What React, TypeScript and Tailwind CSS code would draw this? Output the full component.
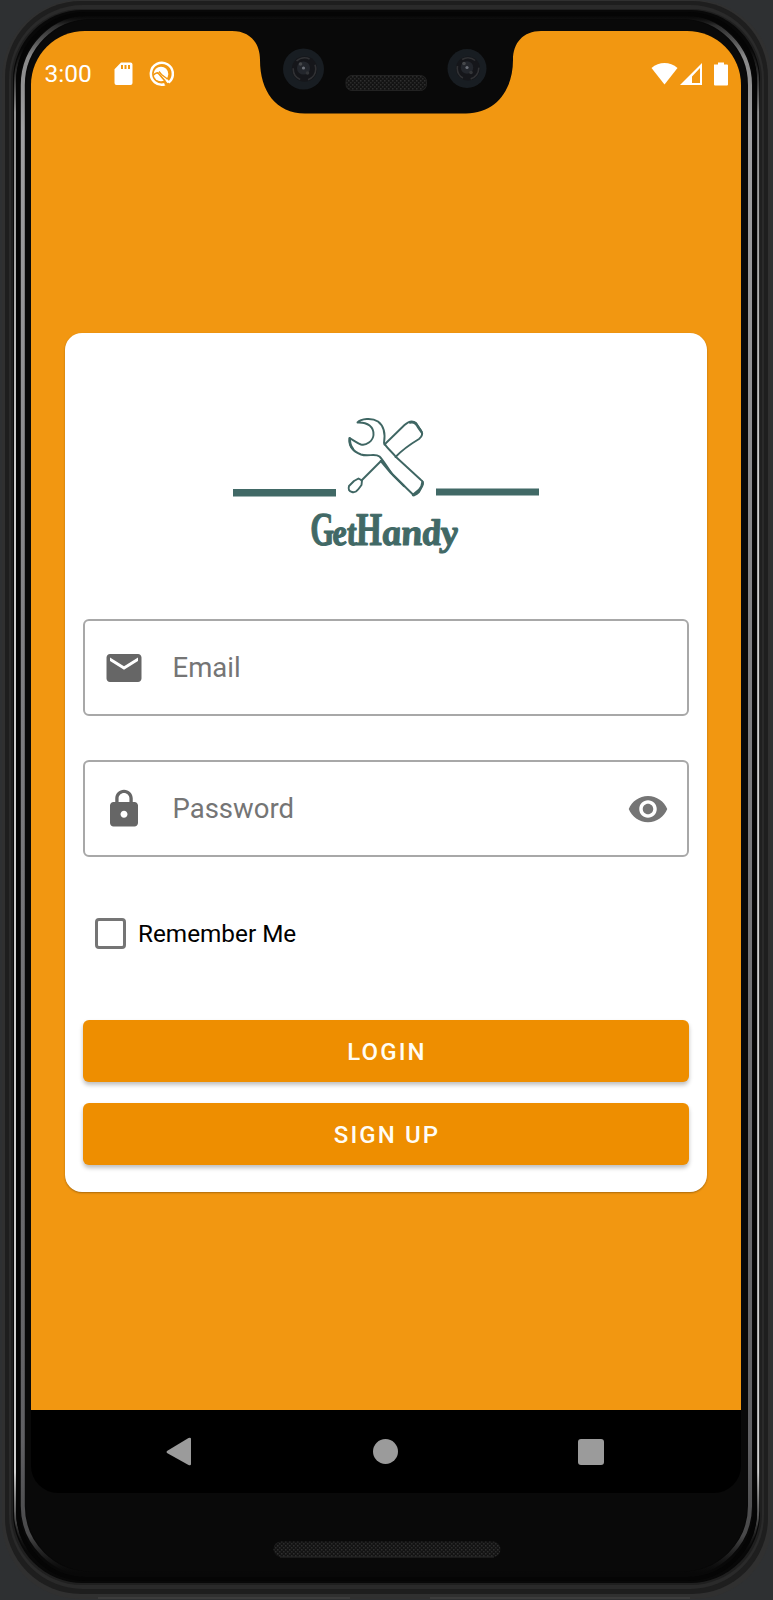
import React from "react";

function DeviceFrame() {
  return (
    <svg className="absolute inset-0" width="773" height="1600" viewBox="0 0 773 1600" fill="none" aria-hidden="true">
      <defs>
        <linearGradient id="shine" x1="0" y1="0" x2="0" y2="1600" gradientUnits="userSpaceOnUse">
          <stop offset=".01" stopColor="#222" stopOpacity="0" />
          <stop offset=".016" stopColor="#555" stopOpacity=".5" />
          <stop offset=".035" stopColor="#888" />
          <stop offset=".08" stopColor="#a0a0a2" />
          <stop offset=".4" stopColor="#808083" />
          <stop offset=".9" stopColor="#606063" />
          <stop offset=".96" stopColor="#484849" />
          <stop offset=".983" stopColor="#222" stopOpacity="0" />
        </linearGradient>
        <linearGradient id="edge" x1="0" y1="0" x2="0" y2="1600" gradientUnits="userSpaceOnUse">
          <stop offset=".03" stopColor="#555" stopOpacity="0" />
          <stop offset=".07" stopColor="#909090" />
          <stop offset=".3" stopColor="#d0d0d0" />
          <stop offset=".92" stopColor="#d0d0d0" />
          <stop offset=".95" stopColor="#777" stopOpacity=".6" />
          <stop offset=".97" stopColor="#222" stopOpacity="0" />
        </linearGradient>
      </defs>
      <rect x="2" y="0" width="770" height="1599" rx="78" fill="#303030" />
      <rect x="5" y="1" width="763" height="1593" rx="76" fill="#1e1e1e" />
      <rect x="9" y="5" width="755" height="1584" rx="74" fill="#2a2a2a" />
      <rect x="11" y="9" width="751" height="1576" rx="71" fill="#1f1f1f" />
      <rect x="13" y="10" width="747" height="1573" rx="70" fill="#080808" />
      <rect x="15" y="12" width="743.2" height="1569" rx="70" stroke="url(#edge)" strokeWidth="2" />
      <rect x="18" y="14" width="737" height="1565" rx="68" stroke="#050505" strokeWidth="4" />
      <rect x="22.8" y="17" width="727.2" height="1557" rx="68" stroke="url(#shine)" strokeWidth="4" />
      <rect x="26" y="19.500" width="721" height="1552" rx="65" fill="#090909" />
      <path d="M98 1598H350" stroke="#484848" />
      <path d="M430 1598H690" stroke="#484848" />
    </svg>
  );
}

function Lens({ cx, cy, r }: { cx: number; cy: number; r: number }) {
  return (
    <g>
      <circle cx={cx} cy={cy} r={r} fill="#181d22" />
      <circle cx={cx + 1} cy={cy} r={r * 0.62} fill="#15161a" />
      <circle cx={cx + 1} cy={cy} r={r * 0.55} stroke="#303134" strokeWidth="1.600" strokeDasharray="14 8" fill="none" />
      <circle cx={cx} cy={cy - 1} r={r * 0.32} fill="#23262c" />
      <circle cx={cx - 3} cy={cy - 5} r="1.800" fill="#45474a" />
      <circle cx={cx} cy={cy - 1} r="1.600" fill="#6c7078" />
      <circle cx={cx + 4} cy={cy + 4} r="1.800" fill="#333538" />
    </g>
  );
}

function Notch() {
  return (
    <svg className="absolute left-[191px] top-[-1px]" width="328" height="86" viewBox="222 30 328 86" aria-hidden="true">
      <defs>
        <pattern id="mesh" width="4" height="4" patternUnits="userSpaceOnUse">
          <rect width="4" height="4" fill="#131313" />
          <rect x="0" y="0" width="1.500" height="1.500" fill="#2e2e2e" />
          <rect x="2" y="2" width="1.500" height="1.500" fill="#2a2a2a" />
        </pattern>
      </defs>
      <path d="M222 30V31H232C250 31 260 43 260 60C260 91 276 113.500 305 113.500H466C495 113.500 513 91 513 60C513 43 523 31 541 31H550V30Z" fill="#090909" />
      <Lens cx={303.500} cy={69} r={20.500} />
      <Lens cx={467} cy={68.500} r={19.500} />
      <rect x="346" y="75.500" width="80.500" height="15" rx="6" fill="url(#mesh)" stroke="#222" />
    </svg>
  );
}

function StatusBar() {
  return (
    <div className="flex h-[86px] items-center pl-[13.5px] pr-[13px] text-white">
      <span className="w-[69.5px] pt-px text-[24.5px] leading-none">3:00</span>
      <svg width="19" height="24" viewBox="0 0 19 24" className="mr-[15px]">
        <path fill="#fff" fillRule="evenodd" d="M7 .5H16.500Q18.500 .5 18.500 2.500V21Q18.500 23 16.500 23H2.500Q.5 23 .5 21V7.200ZM7 3V7H9V3ZM10.500 3V7H12.500V3ZM14 3V7H16V3Z" />
      </svg>
      <svg width="26" height="26" viewBox="0 0 26 26" fill="none">
        <path d="M20.400 21.600A11 11 0 1 0 17 23.300" stroke="#fff" strokeWidth="2.500" />
        <path d="M20.600 21.500L18 18.500" stroke="#fff" strokeWidth="2.500" />
        <path d="M17.500 24L16.500 20.500" stroke="#f29711" strokeWidth="1.300" />
        <circle cx="13" cy="13" r="7.300" fill="#fff" />
        <path d="M5.500 14Q9 10.500 11 13L17 20" stroke="#f29711" strokeWidth="1.700" />
        <path d="M11 10.500L13.500 13.500L19.500 18" stroke="#f29711" strokeWidth="1.300" />
      </svg>
      <svg width="77" height="24" viewBox="651 61 77 24" className="ml-auto">
        <path fill="#fff" d="M651.500 67C659 60.300 670 60.300 677.500 67L664.500 83.500Z" />
        <path fill="#fff" fillRule="evenodd" d="M680 84L702 62V84ZM692 82H700V67L692 75.500Z" />
        <path fill="#fff" d="M714 63.500H718V61.500H724V63.500H727Q728 63.500 728 64.500V83.500Q728 84.500 727 84.500H715Q714 84.500 714 83.500Z" />
      </svg>
    </div>
  );
}

function Logo() {
  return (
    <svg width="330" height="150" viewBox="221 410 330 150" className="mx-auto" aria-label="GetHandy">
      <path d="M233 489H336V496.500H233ZM436 488.500H539V495.500H436Z" fill="#416966" />
      <g fill="none" stroke="#3f6663" strokeWidth="1.900" strokeLinejoin="round" strokeLinecap="round">
        <path d="M357.500 422.500C361 418.500 372 417.500 378 421.500C384 426 385.500 434 384 443C386 447 391 451 396 457L421 480Q424 482 422.500 485.500L419 492Q417 494 414 495.500L393 475C388 469 384 461 379.500 456.500C375 453 368 457 361 454.500C352 451 348.500 446 349.500 438C353 440 357 443 361 444.500C366 446 373 441 373.500 435C374 427 368 422 357.500 422.500Z" />
        <path d="M384.500 444.500L404.500 425Q411 419 416 423L421 430.500Q424 435 419 439Q404 448 395.500 457" />
        <path d="M381 461L361.500 480.500" />
        <path d="M349 486Q347.500 491 352 492Q355.500 493 358.500 489L361.500 485L362 480.500L358.500 478.500L354 481Z" />
        <path d="M349.800 438.500Q349.500 445 353 449M410 422.500Q415 421 418 427L421.500 432M381 461L391 473L404 486M413 495L419 490Q422.500 486 422.500 482" strokeWidth="2.400" />
      </g>
      <text
        y="0"
        transform="translate(2.500 544.500) skewX(7)"
        fill="#416966"
        stroke="#416966"
        strokeWidth="1.100"
        strokeLinejoin="round"
        fontFamily="'Liberation Serif', serif"
        fontSize="37"
        fontWeight="700"
        fontStyle="italic"
      >
        <tspan x="310" fontSize="47" textLength="23" lengthAdjust="spacingAndGlyphs">G</tspan>
        <tspan x="331" textLength="24" lengthAdjust="spacingAndGlyphs">et</tspan>
        <tspan x="354" fontSize="47" textLength="28" lengthAdjust="spacingAndGlyphs">H</tspan>
        <tspan x="381" textLength="76" lengthAdjust="spacingAndGlyphs">andy</tspan>
      </text>
    </svg>
  );
}

function Field({ label, icon, trailing }: { label: string; icon: React.ReactNode; trailing?: React.ReactNode }) {
  return (
    <div className="flex h-[97px] items-center rounded-[6px] border-2 border-[#a8a8a8] pl-[18px] pr-[18px]">
      {icon}
      <span className="ml-[27.5px] text-[27.5px] leading-none text-[#757575]">{label}</span>
      {trailing}
    </div>
  );
}

function Action({ children }: { children: React.ReactNode }) {
  return (
    <button className="flex h-[62px] w-full items-center justify-center rounded-[6px] bg-[#ee8e00] pl-[2px] pt-[2px] text-[24px] font-medium leading-none tracking-[2.1px] text-[#fffdf5] shadow-[0_3px_4px_rgba(0,0,0,0.25)]">
      {children}
    </button>
  );
}

export default function App() {
  return (
    <div className="relative flex h-[1600px] w-[773px] flex-col overflow-hidden bg-[#2e3032] pl-[31px] pt-[31px] font-['Roboto',sans-serif]">
      <DeviceFrame />
      <main className="relative flex h-[1462px] w-[710px] flex-col overflow-hidden rounded-b-[27px] rounded-t-[54px] bg-black">
        <div className="h-[1379px] bg-[#f29711]">
          <StatusBar />
          <section className="ml-[34px] mt-[216px] flex h-[859px] w-[642px] flex-col rounded-[17px] bg-white px-[18px] pt-[77px] shadow-[0_1px_2px_rgba(0,0,0,0.3)]">
            <Logo />
            <div className="mt-[59px] flex flex-col gap-[44px]">
              <Field
                label="Email"
                icon={
                  <svg width="42" height="42" viewBox="0 0 24 24" fill="#666">
                    <path d="M20 4H4c-1.100 0-1.990.9-1.990 2L2 18c0 1.100.9 2 2 2h16c1.100 0 2-.9 2-2V6c0-1.100-.9-2-2-2zm0 4-8 5-8-5V6l8 5 8-5v2z" />
                  </svg>
                }
              />
              <Field
                label="Password"
                icon={
                  <svg width="42" height="42" viewBox="0 0 24 24" fill="#666">
                    <path d="M18 8h-1V6c0-2.760-2.240-5-5-5S7 3.240 7 6v2H6c-1.100 0-2 .9-2 2v10c0 1.100.9 2 2 2h12c1.100 0 2-.9 2-2V10c0-1.100-.9-2-2-2zm-6 9c-1.100 0-2-.9-2-2s.9-2 2-2 2 .9 2 2-.9 2-2 2zm3.100-9H8.900V6c0-1.710 1.390-3.100 3.100-3.100s3.100 1.390 3.100 3.100v2z" />
                  </svg>
                }
                trailing={
                  <svg width="42" height="42" viewBox="0 0 24 24" fill="#757575" className="ml-auto">
                    <path d="M12 4.500C7 4.500 2.730 7.610 1 12c1.730 4.390 6 7.500 11 7.500s9.270-3.110 11-7.500c-1.730-4.390-6-7.500-11-7.500zM12 17c-2.760 0-5-2.240-5-5s2.240-5 5-5 5 2.240 5 5-2.240 5-5 5zm0-8c-1.660 0-3 1.340-3 3s1.340 3 3 3 3-1.340 3-3-1.340-3-3-3z" />
                  </svg>
                }
              />
            </div>
            <label className="ml-[12px] mt-[60px] flex h-[32px] items-center">
              <span className="size-[31px] rounded-[4px] border-[3px] border-[#757575]" />
              <span className="ml-[12px] pt-[2px] text-[24.3px] leading-none text-black">Remember Me</span>
            </label>
            <div className="mt-[70.5px] flex flex-col gap-[21px]">
              <Action>LOGIN</Action>
              <Action>SIGN UP</Action>
            </div>
          </section>
        </div>
        <nav className="relative flex h-[83px] items-center">
          <svg width="26" height="30" viewBox="0 0 26 30" className="ml-[135px]">
            <path d="M1 14L22.500 1Q25 0 25 2V27Q25 29 22.500 28L1 16Q0 15 1 14Z" fill="#9b9b9b" />
          </svg>
          <span className="ml-[181px] size-[25px] rounded-full bg-[#9b9b9b]" />
          <span className="ml-[180px] size-[26px] rounded-[3px] bg-[#9b9b9b]" />
        </nav>
        <Notch />
      </main>
      <svg className="relative ml-[242px] mt-[48px]" width="228" height="17" viewBox="0 0 228 17">
        <defs>
          <pattern id="grille" width="4" height="4" patternUnits="userSpaceOnUse">
            <rect width="4" height="4" fill="#131313" />
            <rect width="1.500" height="1.500" fill="#303030" />
            <rect x="2" y="2" width="1.500" height="1.500" fill="#2c2c2c" />
          </pattern>
        </defs>
        <rect x=".5" y=".5" width="227" height="15.500" rx="7.500" fill="url(#grille)" />
        <path d="M7 16H221" stroke="#2d2d2d" />
      </svg>
    </div>
  );
}
